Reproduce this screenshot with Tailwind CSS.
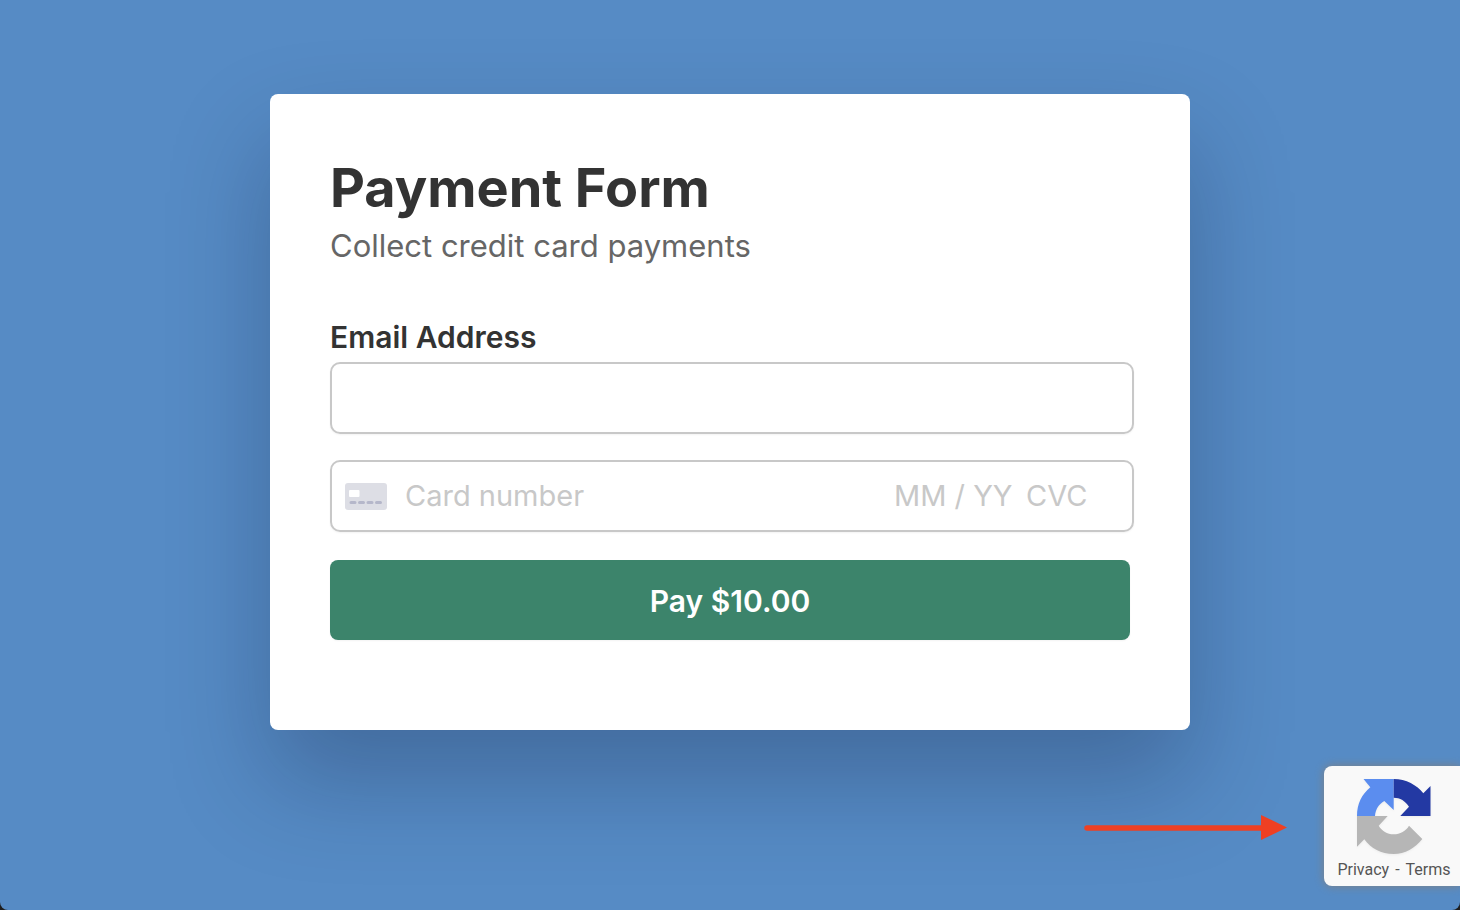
<!DOCTYPE html>
<html lang="en" class="bg-[#1e1e1e]">
<head>
  <meta charset="UTF-8" />
  <meta name="viewport" content="width=device-width, initial-scale=1.0" />
  <title>Payment Form</title>
  <script src="https://cdn.jsdelivr.net/npm/@tailwindcss/browser@4"></script>
</head>
<body class="relative min-h-screen overflow-hidden rounded-b-lg bg-[#568bc5] font-['Inter',sans-serif] text-[#333333]">
  <!-- Payment card -->
  <main class="px-6 pt-[94px] pb-12">
    <form class="mx-auto max-w-[920px] rounded-lg bg-white pt-15 pr-14 pb-[90px] pl-15 shadow-[0_50px_100px_rgba(6,12,40,0.25)]">
      <h1 class="text-[54px] leading-[68px] font-bold">Payment Form</h1>
      <p class="text-[31px] leading-12 text-[#666666]">Collect credit card payments</p>

      <label for="email" class="mt-[47px] block text-[30px] leading-10 font-semibold">Email Address</label>
      <input type="email" id="email" name="email" class="mt-[5px] block h-18 w-full rounded-[10px] border-2 border-[#c8c8c8] px-3 text-[30px] shadow-xs" />

      <div class="mt-[26px] flex h-18 items-center rounded-[10px] border-2 border-[#c8c8c8] pr-3 pl-[13px] text-[29px] shadow-xs">
        <svg class="h-7 w-[42px] shrink-0" viewBox="0 0 42 28" aria-hidden="true">
          <rect y="1" width="42" height="27" rx="3" fill="#dddee5" />
          <rect x="4" y="8" width="10.500" height="7" rx="1" fill="#ffffff" />
          <path d="M6 20.500h4M14.500 20.500h4M23 20.500h4M31.500 20.500h4" stroke="#b5b7ca" stroke-width="3" stroke-linecap="round" />
        </svg>
        <input type="text" name="card" aria-label="Card number" placeholder="Card number" class="ml-[18px] min-w-0 flex-1 placeholder:text-[#c8c8c8]" />
        <input type="text" name="expiry" aria-label="Expiry date" placeholder="MM / YY" class="w-[132px] placeholder:text-[#c8c8c8]" />
        <input type="text" name="cvc" aria-label="CVC" placeholder="CVC" class="w-[94px] placeholder:text-[#c8c8c8]" />
      </div>

      <div class="mt-7 pr-1">
        <button type="submit" class="h-20 w-full rounded-lg bg-[#3c846b] pt-0.5 text-[30px] font-semibold text-white shadow-xs">Pay $10.00</button>
      </div>
    </form>
  </main>

  <!-- Arrow and reCAPTCHA badge -->
  <div class="absolute right-0 bottom-6 flex items-center">
    <svg class="mr-[37px] h-7 w-[204px]" viewBox="0 0 204 28" aria-hidden="true">
      <path d="M4 16H180" stroke="#ee4023" stroke-width="5.500" stroke-linecap="round" />
      <path d="M178 3L204 15.500L178 28Z" fill="#ee4023" />
    </svg>
    <aside class="flex h-30 w-[136px] flex-col items-center rounded-l-lg bg-[#f9f9f9] pt-[13px] pl-1 shadow-[0_0_10px_#808080]">
      <svg class="h-[76px] w-[75px] drop-shadow-xs" viewBox="0 0 75 76" aria-hidden="true">
        <path d="M6.500 0H36.700V31L27.300 22C22 25 18.500 30 18 37H0C0 25 5 15 13.300 8.300Z" fill="#5b8def" />
        <path d="M36.700 0C49 0 60 6 66.300 14.300L73.500 7V37H43.300L52 27.700C48.500 22 43 18.700 36.700 18.700Z" fill="#2339a3" />
        <path d="M0 37H30.700L21.700 46.700C25 52 30 55.300 36.700 55.300C43 55.300 49 52 52 46.700L65.300 60C58 69 48 75 36.700 75C24 75 14 69.500 7.300 60.300L0 67.700Z" fill="#b6b6b6" />
      </svg>
      <p class="mt-1 flex gap-1.5 font-[Roboto,sans-serif] text-base leading-[22px] text-[#555555]"><a href="#privacy">Privacy</a><span>-</span><a href="#terms">Terms</a></p>
    </aside>
  </div>
</body>
</html>
